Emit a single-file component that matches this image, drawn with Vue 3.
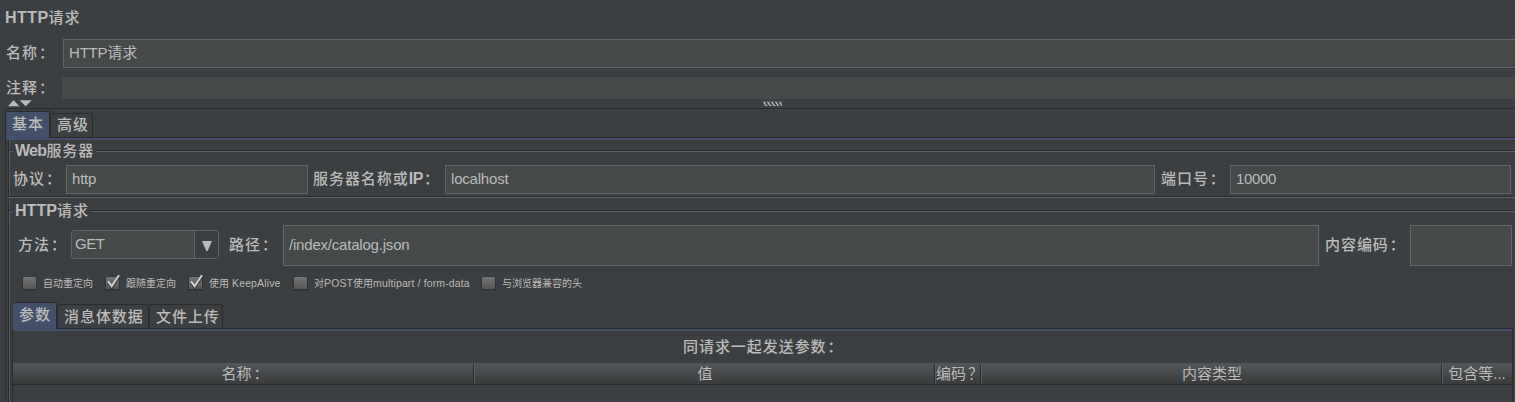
<script setup>
const options = [
  { parts: ['自动重定向'], on: false, w: 83 },
  { parts: ['跟随重定向'], on: true, w: 83 },
  { parts: ['使用', ' KeepAlive'], on: true, w: 105 },
  { parts: ['对', 'POST', '使用', 'multipart / form-data'], on: false, w: 188 },
  { parts: ['与浏览器兼容的头'], on: false, w: 120 },
]
const columns = [
  { t: '名称', m: '：', c: 'c1' },
  { t: '值', c: 'c2' },
  { t: '编码', m: '？', c: 'c3' },
  { t: '内容类型', c: 'c4' },
  { t: '包含等...', c: 'c5' },
]
const isLatin = (s) => /[A-Za-z]/.test(s)
</script>

<template>
  <div class="panel">
    <div class="title bold"><span class="http">HTTP</span>请求</div>

    <div class="row name-row">
      <label class="bold">名称<i class="mark">：</i></label>
      <div class="field name-field"><span>HTTP请求</span></div>
    </div>
    <div class="row note-row">
      <label class="bold">注释<i class="mark">：</i></label>
      <div class="flat"></div>
    </div>

    <div class="splitter">
      <svg class="arrows" width="24" height="7" viewBox="0 0 24 7">
        <path d="M5.5 0.3L11.5 6.3H0Z M11.7 0.3H23.7L17.7 6.3Z" />
      </svg>
      <svg class="grip" width="19" height="6" viewBox="0 0 19 6">
        <path v-for="i in 5" :key="i" :d="`M${i * 4 - 3.5} 0.8l3 4`" />
        <path v-for="i in 5" :key="'d' + i" class="dot" :d="`M${i * 4 - 1.8} 0.8h1M${i * 4 - 3.8} 4.5h1`" />
      </svg>
    </div>

    <div class="pane">
      <div class="tabs">
        <div class="tab active bold">基本</div>
        <div class="tab t-adv bold">高级</div>
        <div class="fill"></div>
      </div>
      <div class="stripe"></div>

      <section class="group server">
        <div class="legend">
          <i class="stub"></i><span class="bold"><span class="web">Web</span>服务器</span><i class="rule"></i>
        </div>
        <div class="row server-row">
          <label class="bold l-proto">协议<i class="mark">：</i></label>
          <div class="field f-proto"><span>http</span></div>
          <label class="bold l-host">服务器名称或<span class="ip">IP</span><i class="mark">：</i></label>
          <div class="field f-host"><span>localhost</span></div>
          <label class="bold l-port">端口号<i class="mark">：</i></label>
          <div class="field f-port"><span class="num">10000</span></div>
        </div>
      </section>

      <section class="group request">
        <div class="legend">
          <i class="stub"></i><span class="bold"><span class="http h2">HTTP</span>请求</span><i class="rule"></i>
        </div>
        <div class="row req-row">
          <label class="bold l-method">方法<i class="mark">：</i></label>
          <div class="combo">
            <span>GET</span>
            <div class="drop">
              <svg width="10" height="10" viewBox="0 0 10 10"><path d="M0 0H10L5.6 10H4.4Z" /></svg>
            </div>
          </div>
          <label class="bold l-path">路径<i class="mark">：</i></label>
          <div class="field f-path"><span>/index/catalog.json</span></div>
          <label class="bold l-enc">内容编码<i class="mark">：</i></label>
          <div class="field f-enc"></div>
        </div>

        <div class="checks">
          <div v-for="o in options" :key="o.parts[0]" class="check" :style="{ width: o.w + 'px' }">
            <svg width="17" height="17" viewBox="0 0 17 17">
              <defs>
                <linearGradient id="boxFill" x1="0" y1="0" x2="0" y2="1">
                  <stop offset="0" stop-color="#737373" />
                  <stop offset="1" stop-color="#565656" />
                </linearGradient>
              </defs>
              <rect x="0" y="2.5" width="15" height="14" rx="1" fill="#303335" />
              <rect x="1" y="3" width="13" height="12" rx="0.5" fill="url(#boxFill)" />
              <g v-if="o.on" fill="none">
                <path d="M3 8.5L6.8 13.5L14 2.5" stroke="#323232" stroke-width="2.4" />
                <path d="M3 7.3L6.7 12.2L14 1.2" stroke="#d0d0d0" stroke-width="2" />
              </g>
            </svg>
            <span class="cap"><span v-for="p in o.parts" :key="p" :class="{ lat: isLatin(p) }">{{ p }}</span></span>
          </div>
        </div>

        <div class="inner">
          <div class="tabs">
            <div class="tab active bold">参数</div>
            <div class="tab t-body bold">消息体数据</div>
            <div class="tab t-file bold">文件上传</div>
            <div class="fill"></div>
          </div>
          <div class="content">
            <div class="stripe"></div>
            <div class="caption bold">同请求一起发送参数<i class="mark">：</i></div>
            <div class="thead">
              <div v-for="c in columns" :key="c.c" class="th" :class="c.c"><span>{{ c.t }}<i v-if="c.m" class="hmark">{{ c.m }}</i></span></div>
            </div>
          </div>
        </div>
      </section>
    </div>
  </div>
</template>

<style>
body {
  margin: 0;
  background: #3c3f41;
  overflow: hidden;
}
</style>

<style scoped>
* {
  box-sizing: border-box;
}
.panel {
  width: 1515px;
  height: 402px;
  overflow: hidden;
  background: #3c3f41;
  color: #bbb;
  font-family: 'Liberation Sans', 'Noto Sans CJK SC', sans-serif;
  font-size: 15px;
  line-height: 20px;
  white-space: pre;
}
.bold {
  font-weight: 500;
  letter-spacing: 0.95px;
}
i {
  font-style: normal;
}
.mark {
  margin-left: 1px;
}
.http,
.web,
.ip {
  font-weight: 700;
  font-size: 16px;
  letter-spacing: 0.45px;
}
.h2 {
  letter-spacing: 0.05px;
}
.web {
  letter-spacing: -0.7px;
}
.ip {
  letter-spacing: -0.4px;
}
.title {
  height: 39px;
  padding: 8px 0 0 5px;
}
.row {
  display: flex;
}
.name-row {
  height: 29px;
  width: 1525px;
}
.name-row label {
  width: 63px;
  padding: 4px 0 0 6px;
}
.name-row .field {
  flex: 1;
}
.field {
  display: flex;
  align-items: center;
  border: 1px solid #646464;
  background: #45494a;
  padding: 0 0 2px 5px;
  letter-spacing: -0.2px;
}
.num {
  letter-spacing: -0.35px;
}
.note-row {
  height: 22px;
  margin-top: 9px;
}
.note-row label {
  width: 62px;
  padding: 1px 0 0 6px;
}
.flat {
  flex: 1;
  background: #45494a;
}
.splitter {
  display: flex;
  height: 9px;
  padding-left: 8px;
}
.arrows {
  margin-top: 1px;
  fill: #bbb;
}
.grip {
  margin: 2px 0 0 731px;
  fill: none;
  stroke: #c4c4c4;
  stroke-width: 1.2;
}
.grip .dot {
  stroke: #8c8e90;
  stroke-width: 1;
}
.pane {
  width: 1530px;
  height: 310px;
  margin-left: 5px;
  border-left: 1px solid #292b2d;
  border-top: 1px solid #292b2d;
}
.tabs {
  display: flex;
  align-items: flex-end;
  height: 29px;
}
.tab {
  height: 25px;
  padding: 2px 0 0 6px;
  border: 1px solid #292b2d;
  border-left-color: #2c2e30;
  border-radius: 3px 3px 0 0;
}
.tab.active {
  width: 44px;
  height: 27px;
  padding: 2px 0 0 6px;
  border: 0;
  border-top: 1px solid #292b2d;
  border-right: 1px solid #292b2d;
  border-radius: 2px 2px 0 0;
  background: #434f6b;
}
.tab.t-adv {
  width: 43px;
  padding-top: 1px;
}
.fill {
  flex: 1;
  align-self: stretch;
  border-bottom: 1px solid #292b2d;
}
.stripe {
  height: 2px;
  background: #434f6b;
}
.group {
  margin-left: 2px;
  border-left: 1px solid #292b2d;
  box-shadow: inset 1px 0 #55585a;
}
.legend {
  display: flex;
  height: 25px;
}
.legend > .bold {
  margin: 0 2px;
  line-height: 21px;
}
.stub,
.rule {
  height: 15px;
  margin-top: 10px;
  border-top: 1px solid #292b2d;
  box-shadow: inset 0 1px #606264;
}
.stub {
  width: 4px;
  box-shadow: inset 1px 1px #606264;
}
.rule {
  height: 2px;
  flex: 1;
}
.server {
  height: 58px;
  border-bottom: 1px solid #606264;
}
.server-row {
  height: 32px;
  border-bottom: 1px solid #292b2d;
}
.server-row .field {
  height: 29px;
}
.server-row label {
  padding-top: 4px;
}
.server-row .l-proto {
  width: 57px;
  padding-left: 4px;
}
.f-proto {
  width: 242px;
}
.l-host {
  width: 137px;
  padding-left: 5px;
}
.f-host {
  width: 710px;
}
.l-port {
  width: 75px;
  padding-left: 6px;
}
.f-port {
  width: 281px;
}
.request {
  height: 210px;
  margin-top: 2px;
}
.req-row {
  height: 41px;
}
.req-row label {
  padding-top: 10px;
}
.l-method {
  width: 62px;
  padding-left: 9px;
}
.combo {
  display: flex;
  width: 148px;
  height: 29px;
  margin-top: 5px;
  border: 1px solid #646464;
  border-radius: 3px;
  background: #45494a;
}
.combo > span {
  width: 122px;
  padding: 3px 0 0 3px;
  letter-spacing: -0.4px;
}
.drop {
  flex: 1;
  display: flex;
  justify-content: center;
  border-left: 1px solid #646464;
  background: #3c3f41;
  border-radius: 0 2px 2px 0;
}
.drop svg {
  margin: 10px 0 0 1px;
  fill: #bbb;
}
.l-path {
  width: 64px;
  padding-left: 10px;
}
.f-path {
  width: 1036px;
}
.l-enc {
  width: 91px;
  padding-left: 6px;
}
.f-enc {
  width: 102px;
}
.checks {
  display: flex;
  height: 35px;
  padding: 8px 0 0 13px;
}
.check {
  display: flex;
}
.cap {
  margin-left: 4px;
  font-size: 10px;
  line-height: 17px;
  padding-top: 1px;
}
.cap .lat {
  letter-spacing: 0.13px;
  font-size: 10.5px;
}
.inner {
  width: 1501px;
  margin-left: 3px;
}
.inner .tabs {
  height: 28px;
  padding-left: 1px;
}
.t-body {
  width: 92px;
}
.t-file {
  width: 74px;
}
.content {
  height: 90px;
  border-left: 1px solid #292b2d;
  border-right: 1px solid #292b2d;
}
.caption {
  height: 32px;
  padding: 6px 0 0 670px;
}
.thead {
  display: flex;
  height: 22px;
  border-bottom: 1px solid #292b2d;
  background: linear-gradient(#525658, #393b3c);
}
.th {
  display: flex;
  justify-content: center;
  height: 19px;
  margin-top: 1px;
  padding-left: 2px;
  line-height: 20px;
  border-right: 1px solid #292b2d;
  box-shadow: inset 1px 0 #5c5f61;
}
.hmark {
  margin: 0 -2px 0 2px;
}
.th.c1 {
  width: 461px;
  box-shadow: none;
}
.c2 {
  width: 461px;
}
.c3 {
  width: 46px;
}
.c4 {
  width: 461px;
}
.th.c5 {
  flex: 1;
  padding-left: 0;
  border-right: 0;
}
</style>
